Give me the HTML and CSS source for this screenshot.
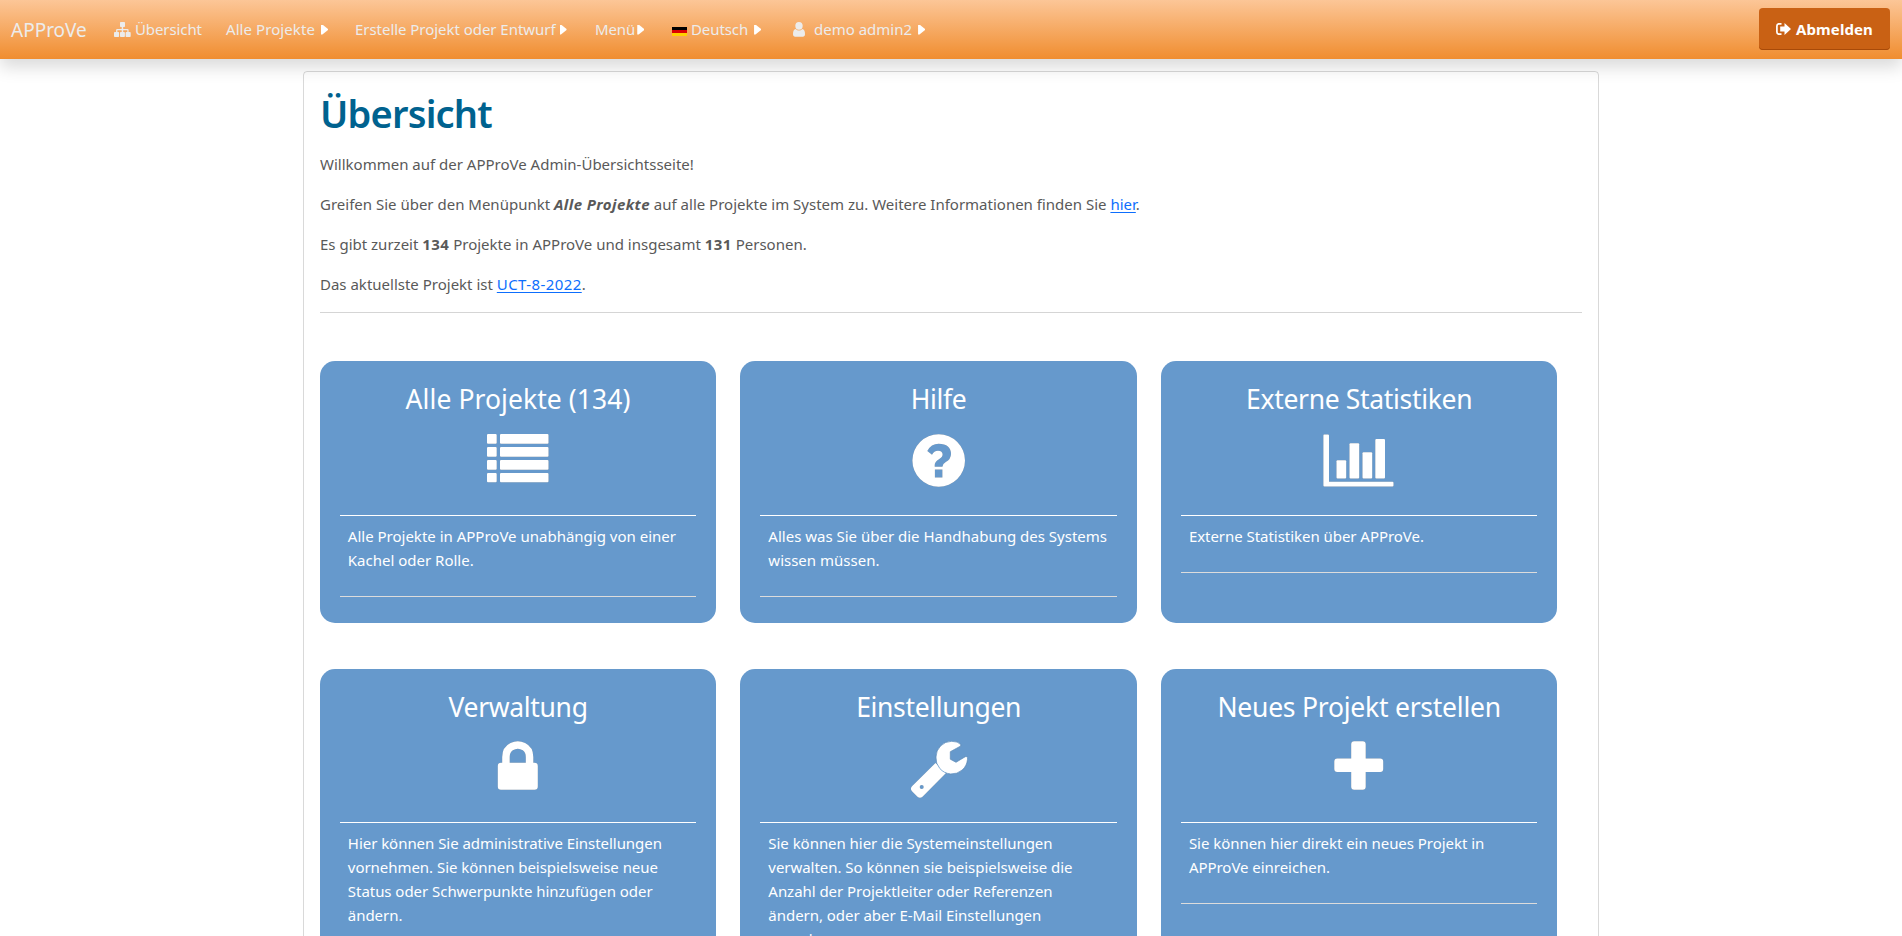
FILE: index.html
```html
<!DOCTYPE html>
<html lang="de">
<head>
<meta charset="utf-8">
<title>APProVe – Übersicht</title>
<link rel="stylesheet" href="styles.css">
</head>
<body>
<header class="navbar">
  <a class="brand">APProVe</a>
  <nav class="nav">
    <a class="nav-item nav-overview">
      <svg class="icon-sitemap" width="17" height="15" viewBox="0 0 17 15"><path d="M6.8 0h3.4q.8 0 .8.8v3.4q0 .8-.8.8H9.2v2h4.3q1.1 0 1.1 1.1V10h1.2q.9 0 .9.8v3.4q0 .8-.9.8h-3.4q-.8 0-.8-.8v-3.4q0-.8.8-.8h.9V8.3H9.2V10h.9q.8 0 .8.8v3.4q0 .8-.8.8H6.8q-.8 0-.8-.8v-3.4q0-.8.8-.8h.9V8.3H3.4V10h.9q.8 0 .8.8v3.4q0 .8-.8.8H.9q-.9 0-.9-.8v-3.4Q0 10 .9 10h1.2V8.1Q2.1 7 3.2 7h4.5V5h-.9Q6 5 6 4.2V.8Q6 0 6.8 0z"/></svg>
      <span class="tight">Übersicht</span>
    </a>
    <a class="nav-item nav-projects"><span class="loose">Alle Projekte</span><i class="caret"></i></a>
    <a class="nav-item nav-create"><span class="snug">Erstelle Projekt oder Entwurf</span><i class="caret"></i></a>
    <a class="nav-item nav-menu"><span class="tight">Menü</span><i class="caret"></i></a>
    <a class="nav-item nav-language"><i class="flag"></i><span class="tight">Deutsch</span><i class="caret"></i></a>
    <a class="nav-item nav-user">
      <svg class="icon-user" width="12" height="15" viewBox="0 0 12 15"><path d="M6 0a3.7 3.9 0 0 1 3.7 3.8A3.7 3.9 0 0 1 6 7.7a3.7 3.9 0 0 1-3.700-3.900A3.700 3.800 0 0 1 6 0zM2.700 7Q4 8.500 6 8.500T9.300 7Q12 7.500 12 12q0 2.700-2.300 2.700H2.300Q0 14.700 0 12 0 7.500 2.700 7z"/></svg>
      <span>demo admin2</span><i class="caret"></i>
    </a>
  </nav>
  <button class="logout">
    <svg width="15" height="12" viewBox="0 0 15 12"><path d="M5.500.800H3Q.9.800.9 2.900v6.200q0 2.100 2.100 2.100h2.500" fill="none" stroke="#fff" stroke-width="1.700"/><path d="M8.500 0 15 6l-6.500 6V8.600H4.200V3.400h4.300z"/></svg>
    <span>Abmelden</span>
  </button>
</header>

<main class="panel">
  <h1>Übersicht</h1>
  <p>Willkommen auf der APProVe Admin-Übersichtsseite!</p>
  <p>Greifen Sie über den Menüpunkt <strong class="count"><em>Alle Projekte</em></strong> auf alle Projekte im System zu. Weitere Informationen finden Sie <a class="link">hier</a>.</p>
  <p>Es gibt zurzeit <strong class="count">134</strong> Projekte in APProVe und insgesamt <strong class="count">131</strong> Personen.</p>
  <p>Das aktuellste Projekt ist <a class="link count">UCT-8-2022</a>.</p>
  <hr>
  <section class="tiles">
    <article class="tile">
      <h2 class="title-wide">Alle Projekte (134)</h2>
      <svg class="tile-icon" viewBox="0 0 80 64"><g><rect x="9" width="9.700" height="9.700" rx="1"/><rect x="9" y="13" width="9.700" height="9.700" rx="1"/><rect x="9" y="26" width="9.700" height="9.700" rx="1"/><rect x="9" y="39" width="9.700" height="9.300" rx="1"/><rect x="22" width="48.500" height="9.700" rx="1"/><rect x="22" y="13" width="48.500" height="9.700" rx="1"/><rect x="22" y="26" width="48.500" height="9.700" rx="1"/><rect x="22" y="39" width="48.500" height="9.300" rx="1"/></g></svg>
      <p class="tile-text">Alle Projekte in APProVe unabhängig von einer Kachel oder Rolle.</p>
    </article>
    <article class="tile">
      <h2>Hilfe</h2>
      <svg class="tile-icon" viewBox="0 0 80 64"><path fill-rule="evenodd" d="M39.700.200a26.300 26.300 0 1 1 0 52.600a26.300 26.300 0 1 1 0-52.600zM28.300 17 33 20.800Q35 16.700 39 16.700q4.600 0 4.600 3.900 0 2.500-3.600 4.600Q35.700 27.700 35.700 31v1.700h7.700q0-2.600 3.400-4.600Q52 25 52 20q0-10-12.300-10.300Q32 9.700 28.300 17zM35.900 35.400v8h7.500v-8z"/></svg>
      <p class="tile-text">Alles was Sie über die Handhabung des Systems wissen müssen.</p>
    </article>
    <article class="tile">
      <h2>Externe Statistiken</h2>
      <svg class="tile-icon" viewBox="0 0 80 64"><path d="M5 .400h4q1 0 1 1v46.400h63.500q1 0 1 1v2.800q0 1-1 1H5.400q-1 0-1-1V1.400q0-1 .6-1z"/><rect x="17.500" y="26.300" width="9.700" height="18.200" rx="1"/><rect x="30.500" y="9.300" width="9.700" height="35.200" rx="1"/><rect x="43.500" y="18.200" width="9.700" height="26.300" rx="1"/><rect x="56.300" y="5" width="9.700" height="39.500" rx="1"/></svg>
      <p class="tile-text snug">Externe Statistiken über APProVe.</p>
    </article>
    <article class="tile tile-compact">
      <h2>Verwaltung</h2>
      <svg class="tile-icon" viewBox="0 0 80 64"><path fill-rule="evenodd" d="M24.200 21.700V16q0-10 8.300-14 7.300-3.300 14.600 0Q55.300 6 55.300 16v5.700h1.300q3.200 0 3.200 3.200v20.600q0 3.200-3.200 3.200H23q-3.200 0-3.200-3.200V24.900q0-3.200 3.200-3.200zM31.700 21.700h16.100V16q0-4.500-3-6.700-5-3-10 0-3.100 2.200-3.100 6.700z"/></svg>
      <p class="tile-text">Hier können Sie administrative Einstellungen vornehmen. Sie können beispielsweise neue Status oder Schwerpunkte hinzufügen oder ändern.</p>
    </article>
    <article class="tile tile-compact">
      <h2>Einstellungen</h2>
      <svg class="tile-icon" viewBox="0 0 80 64"><path fill-rule="evenodd" d="M36.500 22 47 32 23.500 55.700Q21 58 18.500 55.700L13 50.200Q10.800 47.800 13 45.300zM22.700 44a2 2 0 1 0 0 4 2 2 0 1 0 0-4z"/><path class="wrench-head" d="M61.700 3.500V5L51.300 10.700v7.500L57 21.300l9.300-5.600h1.700q.8.500.5 2.600A15.700 15.700 0 0 1 37 16 15.700 15.700 0 0 1 52.700.3q6.300 0 9 3.200z"/></svg>
      <p class="tile-text">Sie können hier die Systemeinstellungen verwalten. So können sie beispielsweise die Anzahl der Projektleiter oder Referenzen ändern, oder aber E-Mail Einstellungen vornehmen.</p>
    </article>
    <article class="tile tile-compact">
      <h2 class="title-long">Neues Projekt erstellen</h2>
      <svg class="tile-icon" viewBox="0 0 80 64"><path d="M35.200.200h8.500q3 0 3 3v14.300h14.500q3 0 3 3V28q0 3-3 3H46.700v14.700q0 3-3 3h-8.500q-3 0-3-3V31H18.300q-3 0-3-3v-7.500q0-3 3-3h13.900V3.200q0-3 3-3z"/></svg>
      <p class="tile-text">Sie können hier direkt ein neues Projekt in APProVe einreichen.</p>
    </article>
  </section>
</main>
</body>
</html>
```

FILE: styles.css
```css
* { box-sizing: border-box; }

body {
  margin: 0;
  height: 100vh;
  overflow: hidden;
  background: #fff;
  color: #595959;
  font: 15px/24px "Noto Sans", "Open Sans", sans-serif;
}

.tight { letter-spacing: -0.1px; }
.snug { letter-spacing: -0.04px; }
.loose { letter-spacing: 0.08px; }
.count { letter-spacing: 0.42px; }

/* Navigation bar */
.navbar {
  display: flex;
  align-items: center;
  height: 59px;
  padding: 0 12px 0 11px;
  color: #ececec;
  background: linear-gradient(#fcc697, #f08d2f);
  box-shadow: 0 8px 16px rgba(0, 0, 0, 0.15);
}
.brand { width: 103px; font-size: 19px; }
.nav { display: flex; flex: 1; }
.nav-item { display: flex; align-items: center; white-space: nowrap; }
.nav-item span { padding-bottom: 2px; }
.nav svg { fill: #ececec; }
.nav-overview { width: 112px; gap: 4px; }
.nav-projects { width: 129px; gap: 6px; }
.nav-create { width: 240px; gap: 4px; }
.nav-menu { width: 77px; gap: 2px; }
.nav-language { width: 121px; gap: 4px; }
.nav-language .caret { margin-left: 2px; }
.nav-user .icon-user { margin-right: 9px; }
.nav-user .caret { margin-left: 6px; }
.caret {
  width: 7px;
  height: 10px;
  background: #fff;
  clip-path: polygon(0 0, 20% 0, 100% 45%, 100% 55%, 20% 100%, 0 100%);
}
.flag {
  width: 15px;
  height: 9px;
  margin-top: 3px;
  background: linear-gradient(#000 33.3%, #d00 33.3% 66.6%, #ffce00 66.6%);
}
.logout {
  display: flex;
  align-items: center;
  justify-content: center;
  gap: 5px;
  width: 131px;
  height: 42px;
  margin-bottom: 1px;
  padding: 0;
  border: 0;
  border-radius: 4px;
  box-shadow: inset 0 -1px #a84a08;
  background: #c96114;
  color: #fff;
  font: 700 15px "Noto Sans", sans-serif;
  letter-spacing: 0.1px;
}
.logout svg { fill: #fff; }

/* Content panel */
.panel {
  width: 1296px;
  margin: 12px auto 0;
  padding: 16px;
  border: 1px solid rgba(0, 0, 0, 0.15);
  border-radius: 4px;
}
.panel h1 {
  margin: 0 0 15px;
  padding-top: 1px;
  color: #00628f;
  font-size: 38px;
  font-weight: 600;
  line-height: 48px;
  letter-spacing: -0.8px;
}
.panel p { margin: 0 0 16px; }
.panel hr { height: 1px; margin: 0 0 48px; border: 0; background: #d5d5d5; }
.link { color: #0d6efd; text-decoration: underline; text-underline-offset: 2px; }

/* Tiles */
.tiles {
  display: grid;
  grid-template-columns: repeat(3, 1fr);
  gap: 46px 24px;
  margin: 0 24.6px 0 -0.2px;
}
.tile {
  padding: 20px 20px 26px;
  border-radius: 15px;
  background: #6699cc;
  color: #fff;
}
.tile h2 {
  margin: 0 0 18px;
  padding-top: 1px;
  font-size: 26.5px;
  font-weight: 400;
  line-height: 34px;
  text-align: center;
  letter-spacing: -0.33px;
}
.tile .title-wide { letter-spacing: 0.07px; }
.tile .title-long { letter-spacing: -0.24px; }
.tile-icon {
  display: block;
  width: 80px;
  height: 64px;
  margin: 0 auto 17px;
  fill: #fff;
  filter: drop-shadow(0.5px 0.5px 0.5px rgba(120, 100, 80, 0.5));
}
.wrench-head { stroke: #6699cc; stroke-width: 0.8px; }
.tile .tile-text {
  margin: 0;
  padding: 8px 8px 24px;
  border-top: 1px solid #fff;
  border-bottom: 1px solid #dcdcdc;
}
.tile-compact h2 { margin-bottom: 17px; }
.tile-compact .tile-text { letter-spacing: -0.04px; }
```
